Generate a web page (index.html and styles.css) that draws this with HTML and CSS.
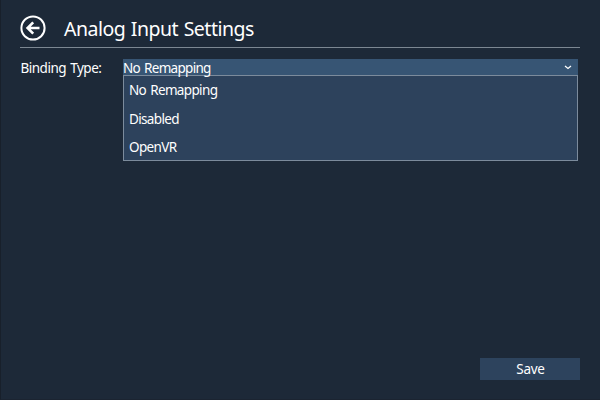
FILE: index.html
```html
<!DOCTYPE html>
<html lang="en">
<head>
<meta charset="utf-8">
<title>Analog Input Settings</title>
<link rel="stylesheet" href="styles.css">
</head>
<body>
<main class="panel">
  <header class="header">
    <button class="back" aria-label="Back">
      <svg width="26" height="26" viewBox="0 0 26 26" fill="none" stroke="#fff">
        <circle cx="13" cy="13" r="11.6" stroke-width="2"/>
        <path d="M19.5 13H8M13.2 7.4L7.6 13l5.6 5.6" stroke-width="2.6"/>
      </svg>
    </button>
    <h1 class="title">Analog Input Settings</h1>
  </header>
  <div class="field">
    <span class="label">Binding Type:</span>
    <div class="select">
      <div class="value"><span class="current">No Remapping</span>
        <svg class="chevron" width="8" height="5" viewBox="0 0 8 5" fill="none" stroke="#fff" stroke-width="1.3"><path d="M1 1l3 2.4L7 1"/></svg>
      </div>
      <ul class="menu">
        <li class="option">No Remapping</li>
        <li class="option">Disabled</li>
        <li class="option">OpenVR</li>
      </ul>
    </div>
  </div>
  <footer class="footer"><button class="save">Save</button></footer>
</main>
</body>
</html>
```
FILE: styles.css
```css
* { box-sizing: border-box; }
body {
  margin: 0;
  background: #1d2938;
  color: #fff;
  font: 13.5px/18px "Noto Sans", sans-serif;
  letter-spacing: -0.7px;
  word-spacing: 1.2px;
}
.panel {
  display: flex;
  flex-direction: column;
  width: 600px;
  height: 400px;
  padding: 14px 20px 19px 19px;
  border-left: 1px solid #18202b;
  border-bottom: 1px solid #1b2431;
}
.header {
  display: flex;
  align-items: center;
  gap: 18px;
  height: 34px;
  padding-bottom: 6px;
  border-bottom: 1px solid #7c8792;
}
.back { width: 26px; height: 26px; padding: 0; border: 0; background: none; }
.back svg { display: block; }
.title {
  margin: 0;
  padding-top: 2px;
  font-size: 19.5px;
  line-height: 26px;
  font-weight: 400;
  letter-spacing: -0.5px;
  word-spacing: 1px;
  white-space: nowrap;
}
.field { display: flex; margin-top: 11px; padding-right: 2px; }
.label { width: 103px; padding-left: 0.5px; letter-spacing: -0.5px; white-space: nowrap; }
.select { flex: 1; }
.value {
  display: flex;
  align-items: center;
  justify-content: space-between;
  height: 16px;
  padding-right: 6px;
  background: #375574;
}
.current { padding-top: 2px; }
.menu {
  height: 86px;
  margin: 0;
  padding: 0 5px;
  border: 1px solid #7c8b9c;
  background: #2d425c;
  list-style: none;
}
.option { height: 28.5px; line-height: 29px; letter-spacing: -0.65px; }
.footer { display: flex; justify-content: flex-end; margin-top: auto; }
.save {
  width: 100px;
  height: 22px;
  padding: 0 0 0 1px;
  border: 0;
  background: #2d435d;
  color: #fff;
  font: inherit;
  letter-spacing: -0.3px;
}
```
